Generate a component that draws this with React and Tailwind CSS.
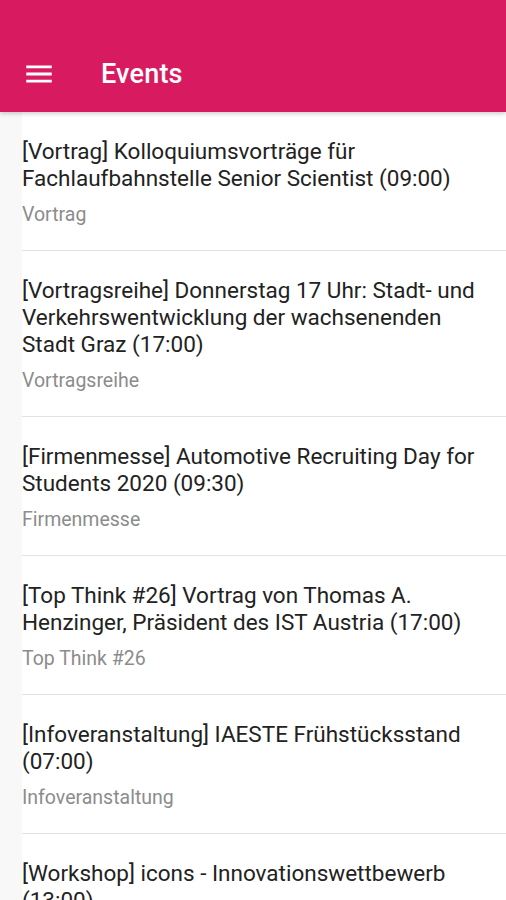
import React from "react";

const events = [
  {
    title: "[Vortrag] Kolloquiumsvorträge für Fachlaufbahnstelle Senior Scientist (09:00)",
    category: "Vortrag",
  },
  {
    title:
      "[Vortragsreihe] Donnerstag 17 Uhr: Stadt- und Verkehrswentwicklung der wachsenenden Stadt Graz (17:00)",
    category: "Vortragsreihe",
  },
  {
    title: "[Firmenmesse] Automotive Recruiting Day for Students 2020 (09:30)",
    category: "Firmenmesse",
  },
  {
    title: "[Top Think #26] Vortrag von Thomas A. Henzinger, Präsident des IST Austria (17:00)",
    category: "Top Think #26",
  },
  {
    title: "[Infoveranstaltung] IAESTE Frühstücksstand (07:00)",
    category: "Infoveranstaltung",
  },
  {
    title: "[Workshop] icons - Innovationswettbewerb (13:00)",
    category: "Workshop",
  },
];

function MenuIcon() {
  return (
    <svg width="34" height="34" viewBox="0 0 24 24" fill="white">
      <path d="M3 18h18v-2H3v2zm0-5h18v-2H3v2zm0-7v2h18V6H3z" />
    </svg>
  );
}

function EventRow({ event }) {
  return (
    <div className="pt-[26px] pb-[24px] pr-[22px] border-b border-[#e2e2e2]">
      <p className="text-[22.5px] leading-[27px] text-[#222222]">{event.title}</p>
      <p className="mt-[12px] text-[19.5px] leading-[22px] text-[#8c8c8c]">
        {event.category}
      </p>
    </div>
  );
}

export default function App() {
  return (
    <div className="w-[506px] h-[900px] overflow-hidden bg-[#f8f8f8] font-['Roboto',sans-serif]">
      <header className="relative z-10 h-[112px] bg-[#d81b60] shadow-[0_2px_4px_rgba(0,0,0,0.18)]">
        <div className="pt-[36px] h-full flex items-center">
          <div className="ml-[22px] flex items-center">
            <MenuIcon />
          </div>
          <h1 className="ml-[45px] text-[27px] font-medium text-white tracking-[0.2px]">
            Events
          </h1>
        </div>
      </header>
      <div className="ml-[22px] bg-white">
        {events.map((event, index) => (
          <EventRow key={index} event={event} />
        ))}
      </div>
    </div>
  );
}
